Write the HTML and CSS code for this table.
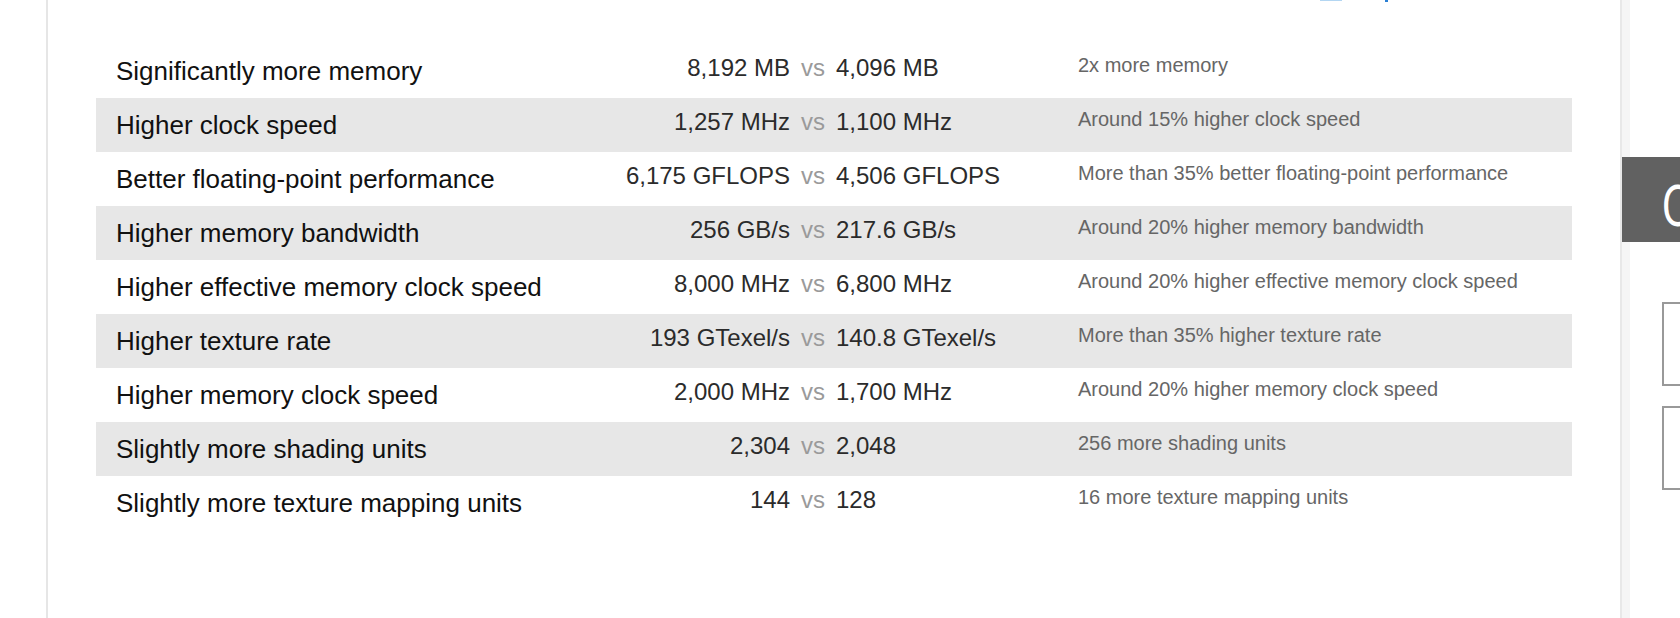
FILE: index.html
```html
<!DOCTYPE html>
<html lang="en">
<head>
<meta charset="utf-8">
<title>Comparison</title>
<link rel="stylesheet" href="styles.css">
</head>
<body>
<div class="page">
  <div class="gutter"></div>
  <main class="panel">
    <div class="topbar"><span class="tb-a"></span><span class="tb-b"></span></div>
    <div class="specs">
      <div class="row">
        <div class="label">Significantly more memory</div>
        <div class="val left">8,192 MB</div><div class="vs">vs</div><div class="val right">4,096 MB</div>
        <div class="note">2x more memory</div>
      </div>
      <div class="row">
        <div class="label">Higher clock speed</div>
        <div class="val left">1,257 MHz</div><div class="vs">vs</div><div class="val right">1,100 MHz</div>
        <div class="note">Around 15% higher clock speed</div>
      </div>
      <div class="row">
        <div class="label">Better floating-point performance</div>
        <div class="val left">6,175 GFLOPS</div><div class="vs">vs</div><div class="val right">4,506 GFLOPS</div>
        <div class="note">More than 35% better floating-point performance</div>
      </div>
      <div class="row">
        <div class="label">Higher memory bandwidth</div>
        <div class="val left">256 GB/s</div><div class="vs">vs</div><div class="val right">217.6 GB/s</div>
        <div class="note">Around 20% higher memory bandwidth</div>
      </div>
      <div class="row">
        <div class="label">Higher effective memory clock speed</div>
        <div class="val left">8,000 MHz</div><div class="vs">vs</div><div class="val right">6,800 MHz</div>
        <div class="note">Around 20% higher effective memory clock speed</div>
      </div>
      <div class="row">
        <div class="label">Higher texture rate</div>
        <div class="val left">193 GTexel/s</div><div class="vs">vs</div><div class="val right">140.8 GTexel/s</div>
        <div class="note">More than 35% higher texture rate</div>
      </div>
      <div class="row">
        <div class="label">Higher memory clock speed</div>
        <div class="val left">2,000 MHz</div><div class="vs">vs</div><div class="val right">1,700 MHz</div>
        <div class="note">Around 20% higher memory clock speed</div>
      </div>
      <div class="row">
        <div class="label">Slightly more shading units</div>
        <div class="val left">2,304</div><div class="vs">vs</div><div class="val right">2,048</div>
        <div class="note">256 more shading units</div>
      </div>
      <div class="row">
        <div class="label">Slightly more texture mapping units</div>
        <div class="val left">144</div><div class="vs">vs</div><div class="val right">128</div>
        <div class="note">16 more texture mapping units</div>
      </div>
    </div>
  </main>
  <aside class="sidebar">
    <div class="side-head"><span class="side-title">C</span></div>
    <div class="side-box"></div>
    <div class="side-box"></div>
  </aside>
</div>
</body>
</html>
```

FILE: styles.css
```css
html, body {
  margin: 0;
  padding: 0;
  width: 1680px;
  height: 618px;
  overflow: hidden;
  background: #fff;
}

.page {
  display: flex;
  height: 618px;
  font-family: "Liberation Sans", Arial, sans-serif;
}

.gutter {
  flex: none;
  width: 46px;
}

.panel {
  flex: none;
  width: 1574px;
  border-left: 2px solid #e6e6e6;
  padding: 0 48px;
  box-sizing: border-box;
}

.topbar {
  display: flex;
  height: 2px;
}

.tb-a {
  margin-left: 1224px;
  width: 22px;
  height: 1px;
  background: #b3d6f2;
}

.tb-b {
  margin-left: 43px;
  width: 3px;
  height: 2px;
  background: #2a7fd4;
}

.specs {
  margin-top: 42px;
  width: 1476px;
}

.row {
  display: grid;
  grid-template-columns: 398px 276px 46px 242px 1fr;
  align-items: start;
  height: 54px;
  padding-left: 20px;
  box-sizing: border-box;
}

.row:nth-child(even) {
  background: #e7e7e7;
}

.label {
  font-size: 26px;
  line-height: 26px;
  padding-top: 14px;
  color: #111;
  white-space: nowrap;
}

.val {
  font-size: 24px;
  line-height: 24px;
  padding-top: 12px;
  color: #2b2b2b;
  white-space: nowrap;
}

.val.left {
  text-align: right;
}

.vs {
  font-size: 24px;
  line-height: 24px;
  padding-top: 12px;
  color: #9a9a9a;
  text-align: center;
}

.note {
  font-size: 20px;
  line-height: 20px;
  padding-top: 11px;
  color: #666;
  white-space: nowrap;
}

.sidebar {
  flex: none;
  width: 300px;
  border-left: 2px solid #e8e8e8;
  background: linear-gradient(to right, #f5f5f5 8px, #fff 8px);
  box-sizing: border-box;
  display: flex;
  flex-direction: column;
  align-items: flex-start;
}

.side-head {
  margin-top: 157px;
  width: 100%;
  height: 85px;
  box-sizing: border-box;
  background: #616161;
  padding: 21px 0 0 40px;
}

.side-title {
  display: inline-block;
  color: #fff;
  font-family: "DejaVu Sans", sans-serif;
  font-size: 56px;
  line-height: 56px;
  transform: scaleX(0.68);
  transform-origin: left center;
}

.side-box {
  margin-left: 40px;
  width: 240px;
  height: 84px;
  border: 2px solid #999;
  box-sizing: border-box;
  background: #fff;
}

.side-head + .side-box {
  margin-top: 60px;
}

.side-box + .side-box {
  margin-top: 20px;
}
```
